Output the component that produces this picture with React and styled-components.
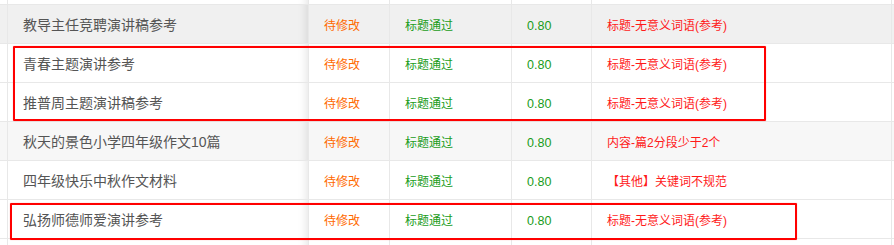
import React from "react";
import styled, { createGlobalStyle } from "styled-components";

const Global = createGlobalStyle`
  html, body { margin: 0; padding: 0; background: #fff; overflow: hidden; }
  body { font-family: "Liberation Sans", "Noto Sans CJK SC", sans-serif; }
`;

const Wrap = styled.div`
  position: relative;
  width: 894px;
  height: 245px;
  overflow: hidden;
`;

// table is scrolled: the row above the first visible one only shows its bottom border
const Table = styled.div`
  margin-top: -34px;
  display: flex;
  flex-direction: column;
`;

const Row = styled.div`
  display: grid;
  grid-template-columns: 8px 301px 81px 122px 80px 300px 1fr;
  height: 39px;
  background: ${(p) => p.$bg || "#fff"};
`;

const Cell = styled.div`
  display: flex;
  align-items: center;
  padding-left: 15px;
  padding-top: 1px;
  box-sizing: border-box;
  border-right: 1px solid #e8e8e8;
  border-bottom: 1px solid #e8e8e8;
  font-size: 12px;
  white-space: nowrap;
  overflow: hidden;
  color: ${(p) => p.$color || "#555"};
`;

const Edge = styled(Cell)`
  padding: 0;
`;

const Filler = styled(Cell)`
  padding: 0;
  border-right: none;
`;

const Title = styled(Cell)`
  padding-top: 0;
  font-size: 14px;
  color: #555;
  box-shadow: inset -10px 0 8px -8px rgba(0, 0, 0, 0.1);
`;

const Score = styled(Cell)`
  padding-top: 3px;
  font-size: 12.5px;
`;

const Mark = styled.div`
  position: absolute;
  left: ${(p) => p.$x}px;
  top: ${(p) => p.$y}px;
  width: ${(p) => p.$w}px;
  height: ${(p) => p.$h}px;
  box-sizing: border-box;
  border: 2px solid #ff0000;
  border-radius: 1px;
  box-shadow: 0 0 1px rgba(255, 0, 0, 0.5);
  pointer-events: none;
`;

const ORANGE = "#ff6a00";
const GREEN = "#1a9c1a";
const RED = "#ff1a1a";

const rows = [
  { title: "", reason: "" },
  { title: "教导主任竞聘演讲稿参考", reason: "标题-无意义词语(参考)", bg: "#f0f0f0" },
  { title: "青春主题演讲参考", reason: "标题-无意义词语(参考)" },
  { title: "推普周主题演讲稿参考", reason: "标题-无意义词语(参考)" },
  { title: "秋天的景色小学四年级作文10篇", reason: "内容-篇2分段少于2个", bg: "#f7f7f7" },
  { title: "四年级快乐中秋作文材料", reason: "【其他】关键词不规范" },
  { title: "弘扬师德师爱演讲参考", reason: "标题-无意义词语(参考)" },
  { title: "", reason: "" },
];

export default function App() {
  return (
    <Wrap>
      <Global />
      <Table>
        {rows.map((r, i) => (
          <Row key={i} $bg={r.bg}>
            <Edge />
            <Title>{r.title}</Title>
            <Cell $color={ORANGE}>{r.title && "待修改"}</Cell>
            <Cell $color={GREEN}>{r.title && "标题通过"}</Cell>
            <Score $color={GREEN}>{r.title && "0.80"}</Score>
            <Cell $color={RED}>{r.reason}</Cell>
            <Filler />
          </Row>
        ))}
      </Table>
      <Mark $x={13} $y={46} $w={753} $h={75} />
      <Mark $x={10} $y={203} $w={787} $h={37} />
    </Wrap>
  );
}
